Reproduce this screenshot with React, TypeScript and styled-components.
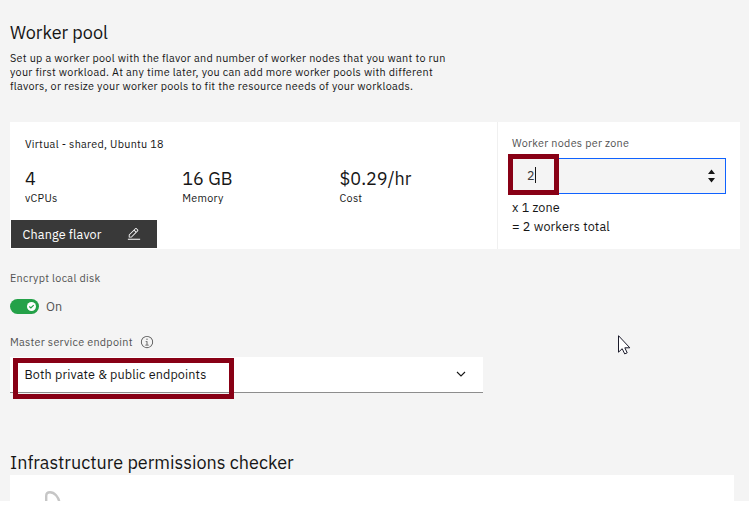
import React from 'react';
import styled, { createGlobalStyle } from 'styled-components';

const GlobalStyle = createGlobalStyle`
  *, *::before, *::after { box-sizing: border-box; }
  body { margin: 0; background: #fff; }
  h2, p { margin: 0; }
`;

const Page = styled.main`
  width: 749px;
  height: 501px;
  padding: 19px 9px 0 10px;
  overflow: hidden;
  background: #f4f4f4;
  color: #161616;
  font-family: 'IBM Plex Sans', Roboto, sans-serif;
  font-size: 10.8px;
  letter-spacing: 0.28px;
`;

const Heading = styled.h2`
  height: 26px;
  line-height: 28px;
  font-size: 18px;
  font-weight: 400;
  white-space: nowrap;
  letter-spacing: 0;
`;

const Intro = styled.p`
  margin-top: 6px;
  line-height: 14px;
  white-space: nowrap;
`;

const PoolCard = styled.section`
  display: grid;
  grid-template-columns: 488px 242px;
  width: 730px;
  height: 127px;
  margin-top: 29px;
  background: #fff;
`;

const FlavorPanel = styled.div`
  display: flex;
  flex-direction: column;
  align-items: flex-start;
  padding: 14px 0 1px 1px;
  border-right: 1px solid #f0f0f0;
`;

const FlavorName = styled.div`
  height: 16px;
  padding-left: 14px;
  line-height: 16px;
`;

const Specs = styled.div`
  display: grid;
  grid-template-columns: repeat(3, 157.3px);
  margin-top: 14px;
  padding-left: 14px;
`;

const SpecValue = styled.div`
  height: 24px;
  line-height: 26px;
  font-size: 18px;
  letter-spacing: 0;
`;

const SpecLabel = styled.div`
  height: 16px;
  line-height: 16px;
`;

const FlavorButton = styled.button`
  display: flex;
  align-items: center;
  justify-content: space-between;
  width: 146px;
  height: 28px;
  margin-top: auto;
  padding: 0 16px 0 11.5px;
  border: 0;
  background: #393939;
  color: #fff;
  font: 400 12.6px/28px 'IBM Plex Sans', Roboto, sans-serif;
  letter-spacing: 0.144px;
`;

const NodesPanel = styled.div`
  padding: 13px 14px 0;
`;

const FieldLabel = styled.div`
  display: flex;
  align-items: center;
  gap: 7px;
  height: 16px;
  line-height: 16px;
  color: #525252;
`;

const NumberField = styled.div`
  position: relative;
  display: flex;
  align-items: center;
  height: 36px;
  margin-top: 7px;
  padding: 0 9px 0 14px;
  border: 1px solid #0f62fe;
  background: #f4f4f4;
  font-size: 12.6px;
  letter-spacing: 0;
  line-height: 16px;
`;

const NumberValue = styled.span`
  display: flex;
  padding-bottom: 2px;
  color: #393939;
`;

const Caret = styled.span`
  width: 1px;
  height: 16px;
  background: #161616;
`;

const Stepper = styled.svg`
  margin-left: auto;
`;

const Totals = styled.div`
  margin-top: 4px;
  font-size: 12.6px;
  line-height: 19px;
  letter-spacing: 0.144px;
`;

const EncryptField = styled.section`
  margin-top: 21px;
`;

const ToggleRow = styled.div`
  display: flex;
  align-items: center;
  gap: 7px;
  height: 15px;
  margin-top: 13px;
  color: #525252;
  font-size: 12.6px;
  line-height: 15px;
  letter-spacing: 0;
`;

const ToggleTrack = styled.span`
  display: flex;
  align-items: center;
  justify-content: flex-end;
  width: 29px;
  height: 15px;
  padding-right: 3px;
  border-radius: 8px;
  background: #24a148;
`;

const EndpointField = styled.section`
  width: 473px;
  margin-top: 20px;
`;

const Select = styled.div`
  position: relative;
  display: flex;
  align-items: center;
  justify-content: space-between;
  height: 36px;
  margin-top: 7px;
  padding: 0 16px 1px 14.5px;
  border-bottom: 1px solid #8d8d8d;
  background: #fff;
  font-size: 12.6px;
  letter-spacing: 0.13px;
`;

const Highlight = styled.span<{ $x: number; $y: number; $w: number }>`
  position: absolute;
  left: ${(p) => p.$x}px;
  top: ${(p) => p.$y}px;
  width: ${(p) => p.$w}px;
  height: 41px;
  border: 5px solid #880015;
`;

const Checker = styled.section`
  margin-top: 56px;
`;

const CheckerBody = styled.div`
  width: 724px;
  height: 27px;
  padding: 16px 0 0 35px;
  overflow: hidden;
  background: #fff;
`;

const Pointer = styled.svg`
  position: absolute;
  left: 618px;
  top: 335px;
`;

const specs = [
  { value: '4', label: 'vCPUs' },
  { value: '16 GB', label: 'Memory' },
  { value: '$0.29/hr', label: 'Cost' },
];

const EditIcon = () => (
  <svg width="14" height="14" viewBox="0 0 32 32" fill="#fff">
    <path d="M2 27h28v2H2zM25.400 9c.8-.8.8-2 0-2.800l-3.600-3.600c-.8-.8-2-.8-2.800 0l-15 15V24h6.400L25.400 9zm-5-5L24 7.600l-3 3L17.400 7l3-3zM6 22v-3.600l10-10 3.600 3.600-10 10H6z" />
  </svg>
);

const InfoIcon = () => (
  <svg width="14" height="14" viewBox="0 0 32 32" fill="#525252">
    <path d="M17 22v-8h-4v2h2v6h-3v2h8v-2zM16 8a1.500 1.500 0 1 0 0 3 1.500 1.500 0 0 0 0-3z" />
    <path d="M16 30a14 14 0 1 1 0-28 14 14 0 0 1 0 28zm0-26a12 12 0 1 0 0 24 12 12 0 0 0 0-24z" />
  </svg>
);

export default function App() {
  return (
    <>
      <GlobalStyle />
      <Page>
        <Heading>Worker pool</Heading>
        <Intro>
          Set up a worker pool with the flavor and number of worker nodes that you want to run
          <br />
          your first workload. At any time later, you can add more worker pools with different
          <br />
          flavors, or resize your worker pools to fit the resource needs of your workloads.
        </Intro>

        <PoolCard>
          <FlavorPanel>
            <FlavorName>Virtual - shared, Ubuntu 18</FlavorName>
            <Specs>
              {specs.map((s) => (
                <div key={s.label}>
                  <SpecValue>{s.value}</SpecValue>
                  <SpecLabel>{s.label}</SpecLabel>
                </div>
              ))}
            </Specs>
            <FlavorButton>
              Change flavor
              <EditIcon />
            </FlavorButton>
          </FlavorPanel>
          <NodesPanel>
            <FieldLabel>Worker nodes per zone</FieldLabel>
            <NumberField>
              <NumberValue>
                2<Caret />
              </NumberValue>
              <Stepper width="9" height="14" viewBox="0 0 9 14" fill="#161616">
                <path d="M1 5 4.500 0.500 8 5zM1 9h7l-3.500 4.500z" />
              </Stepper>
              <Highlight $x={-5} $y={-5} $w={51} />
            </NumberField>
            <Totals>
              <div>x 1 zone</div>
              <div>= 2 workers total</div>
            </Totals>
          </NodesPanel>
        </PoolCard>

        <EncryptField>
          <FieldLabel>Encrypt local disk</FieldLabel>
          <ToggleRow>
            <ToggleTrack>
              <svg width="9" height="9" viewBox="0 0 9 9">
                <circle cx="4.500" cy="4.500" r="4.500" fill="#fff" />
                <path d="M2.300 4.500 3.900 6 6.700 3.200" fill="none" stroke="#24a148" strokeWidth="1.200" />
              </svg>
            </ToggleTrack>
            On
          </ToggleRow>
        </EncryptField>

        <EndpointField>
          <FieldLabel>
            Master service endpoint
            <InfoIcon />
          </FieldLabel>
          <Select>
            Both private &amp; public endpoints
            <svg width="12" height="8" viewBox="0 0 12 8">
              <path d="M2 2l4 4 4-4" fill="none" stroke="#161616" strokeWidth="1.100" />
            </svg>
            <Highlight $x={3} $y={1} $w={221} />
          </Select>
        </EndpointField>

        <Checker>
          <Heading>Infrastructure permissions checker</Heading>
          <CheckerBody>
            <svg width="16" height="22" viewBox="0 0 16 22">
              <path d="M1.200 22V5C1.200 2.500 3 1.200 5 1.200c4.500 0 8.500 4.500 9.500 10.500" fill="none" stroke="#c6c6c6" strokeWidth="2.400" />
            </svg>
          </CheckerBody>
        </Checker>
      </Page>
      <Pointer width="13" height="20" viewBox="0 0 13 20">
        <path d="M.5.700v16.500l3.700-3.500 2.500 5.200 2.500-1.100-2.400-5h5z" fill="#fff" stroke="#1b1b2b" />
      </Pointer>
    </>
  );
}
